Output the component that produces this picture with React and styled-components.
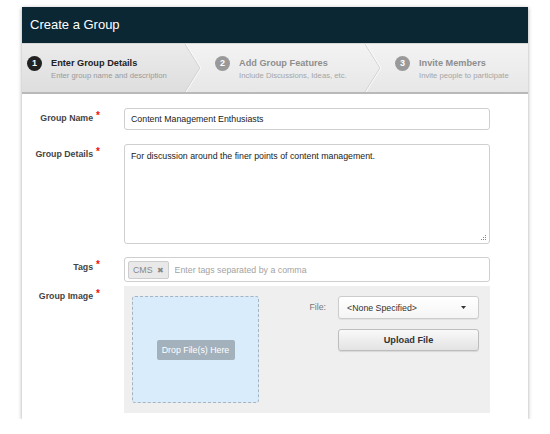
import React from "react";
import styled, { createGlobalStyle } from "styled-components";

const GlobalStyle = createGlobalStyle`
  html, body {
    margin: 0;
    padding: 0;
    background: #ffffff;
    font-family: "Liberation Sans", Arial, sans-serif;
  }
`;

const Card = styled.div`
  width: 506px;
  margin: 7px 0 0 22px;
  background: #fff;
  box-shadow: 0 1px 4px rgba(0, 0, 0, 0.35);
  padding-bottom: 6px;
`;

const Header = styled.div`
  height: 36px;
  background: #0b2733;
  color: #fff;
  font-size: 13px;
  line-height: 36px;
  padding-left: 8px;
`;

const StepsBar = styled.div`
  display: flex;
  height: 48px;
  background: linear-gradient(#f3f3f3, #e7e7e7);
  border-bottom: 2px solid #b9b9b9;
  border-top: 1px solid #d6d6d6;
`;

const Step = styled.div`
  display: flex;
  align-items: flex-start;
  gap: 9px;
  padding: 12px 0 0 ${(p) => (p.$first ? "5px" : "13px")};
  width: ${(p) => p.$width}px;
  box-sizing: border-box;
  background: ${(p) =>
    p.$active ? "linear-gradient(#ebebeb, #dedede)" : "transparent"};
`;

const Circle = styled.div`
  width: 15px;
  height: 15px;
  border-radius: 50%;
  background: ${(p) => (p.$active ? "#222" : "#999")};
  color: #fff;
  font-size: 9px;
  font-weight: bold;
  line-height: 15px;
  text-align: center;
  flex: none;
`;

const StepText = styled.div`
  display: flex;
  flex-direction: column;
  padding-top: 1px;
`;

const StepTitle = styled.div`
  font-size: 9.2px;
  font-weight: bold;
  line-height: 13px;
  color: ${(p) => (p.$active ? "#222" : "#8e8e8e")};
`;

const StepSub = styled.div`
  font-size: 7.7px;
  line-height: 11px;
  color: ${(p) => (p.$active ? "#9a9a9a" : "#a5a5a5")};
`;

const Form = styled.div`
  padding-top: 14px;
`;

const Row = styled.div`
  display: grid;
  grid-template-columns: 78px 366px;
  column-gap: 24px;
  margin-bottom: ${(p) => p.$gap || 0}px;
`;

const Label = styled.div`
  text-align: right;
  font-size: 8.8px;
  font-weight: bold;
  color: #444;
  line-height: 11px;
  padding-top: 4px;
  white-space: nowrap;
`;

const Req = styled.span`
  color: #e11;
  font-size: 10px;
  position: relative;
  top: -2px;
  margin-left: 3px;
`;

const TextInput = styled.input`
  box-sizing: border-box;
  width: 100%;
  height: 22px;
  border: 1px solid #cfcfcf;
  border-radius: 3px;
  padding: 0 6px;
  font-family: inherit;
  font-size: 8.8px;
  color: #222;
  outline: none;
`;

const AreaWrap = styled.div`
  position: relative;
`;

const TextArea = styled.textarea`
  box-sizing: border-box;
  width: 100%;
  height: 100px;
  border: 1px solid #cfcfcf;
  border-radius: 3px;
  padding: 6px 6px;
  font-family: inherit;
  font-size: 8.8px;
  color: #222;
  resize: none;
  outline: none;
  display: block;
`;

const Grip = styled.svg`
  position: absolute;
  right: 3px;
  bottom: 3px;
`;

const TagBox = styled.div`
  box-sizing: border-box;
  height: 25px;
  border: 1px solid #cfcfcf;
  border-radius: 3px;
  display: flex;
  align-items: center;
  padding: 0 3px;
  gap: 6px;
`;

const Chip = styled.span`
  height: 16px;
  line-height: 16px;
  background: #e9e9e9;
  border: 1px solid #cdcdcd;
  border-radius: 2px;
  padding: 0 4px;
  font-size: 8.8px;
  color: #888;
  white-space: nowrap;
`;

const ChipX = styled.span`
  font-size: 8px;
  margin-left: 4px;
  color: #888;
`;

const TagInput = styled.input`
  flex: 1;
  border: none;
  outline: none;
  font-family: inherit;
  font-size: 8.8px;
  padding: 0;
  &::placeholder {
    color: #a3a3a3;
  }
`;

const ImagePanel = styled.div`
  background: #efefef;
  display: flex;
  padding: 10px 11px 10px 8px;
  height: 107px;
`;

const DropZone = styled.div`
  width: 127px;
  box-sizing: border-box;
  background: #d9ecfc;
  border: 1px dashed #a9b3bd;
  border-radius: 3px;
  display: flex;
  align-items: center;
  justify-content: center;
`;

const DropButton = styled.div`
  width: 78px;
  height: 20px;
  line-height: 20px;
  text-align: center;
  background: #a3b1bd;
  border-radius: 2px;
  color: #fff;
  font-size: 8.8px;
`;

const FileControls = styled.div`
  margin-left: auto;
  display: grid;
  grid-template-columns: auto 141px;
  column-gap: 12px;
  row-gap: 10px;
  align-content: start;
`;

const FileLabel = styled.div`
  font-size: 8.8px;
  color: #777;
  line-height: 23px;
  text-align: right;
`;

const Select = styled.div`
  box-sizing: border-box;
  height: 23px;
  border: 1px solid #cccccc;
  border-radius: 3px;
  background: linear-gradient(#ffffff, #f5f5f5);
  box-shadow: 0 1px 1px rgba(0, 0, 0, 0.06);
  display: flex;
  align-items: center;
  justify-content: space-between;
  padding: 0 12px 0 8px;
  font-size: 8.8px;
  color: #333;
`;

const UploadButton = styled.button`
  grid-column: 2;
  height: 22px;
  border: 1px solid #bdbdbd;
  border-radius: 3px;
  background: linear-gradient(#f9f9f9, #e3e3e3);
  box-shadow: 0 1px 1px rgba(0, 0, 0, 0.1);
  font-family: inherit;
  font-size: 9.2px;
  font-weight: bold;
  color: #333;
  padding: 0;
`;

const Separator = ({ leftActive }) => (
  <svg width="18" height="48" viewBox="0 0 18 48" style={{ flex: "none", display: "block" }}>
    {leftActive && (
      <>
        <defs>
          <linearGradient id="actg" x1="0" y1="0" x2="0" y2="1">
            <stop offset="0" stopColor="#ebebeb" />
            <stop offset="1" stopColor="#dedede" />
          </linearGradient>
        </defs>
        <polygon points="0,0 1,0 16,24 1,48 0,48" fill="url(#actg)" />
      </>
    )}
    <polyline points="1,0 16,24 1,48" fill="none" stroke="#cfcfcf" strokeWidth="1" />
    <polyline points="2,0 17,24 2,48" fill="none" stroke="#fafafa" strokeWidth="1" />
  </svg>
);

const steps = [
  { n: 1, title: "Enter Group Details", sub: "Enter group name and description", width: 162 },
  { n: 2, title: "Add Group Features", sub: "Include Discussions, Ideas, etc.", width: 162 },
  { n: 3, title: "Invite Members", sub: "Invite people to participate", width: 146 },
];

export default function App() {
  const active = 1;
  return (
    <>
      <GlobalStyle />
      <Card>
        <Header>Create a Group</Header>
        <StepsBar>
          {steps.map((s, i) => (
            <React.Fragment key={s.n}>
              {i > 0 && <Separator leftActive={steps[i - 1].n === active} />}
              <Step $active={s.n === active} $first={i === 0} $width={s.width}>
                <Circle $active={s.n === active}>{s.n}</Circle>
                <StepText>
                  <StepTitle $active={s.n === active}>{s.title}</StepTitle>
                  <StepSub $active={s.n === active}>{s.sub}</StepSub>
                </StepText>
              </Step>
            </React.Fragment>
          ))}
        </StepsBar>
        <Form>
          <Row $gap={14}>
            <Label>
              Group Name<Req>*</Req>
            </Label>
            <TextInput defaultValue="Content Management Enthusiasts" />
          </Row>
          <Row $gap={13}>
            <Label>
              Group Details<Req>*</Req>
            </Label>
            <AreaWrap>
              <TextArea defaultValue="For discussion around the finer points of content management." />
              <Grip width="6" height="6" viewBox="0 0 6 6">
                <rect x="4" y="0" width="1" height="1" fill="#888" />
                <rect x="2" y="2" width="1" height="1" fill="#888" />
                <rect x="4" y="2" width="1" height="1" fill="#888" />
                <rect x="0" y="4" width="1" height="1" fill="#888" />
                <rect x="2" y="4" width="1" height="1" fill="#888" />
                <rect x="4" y="4" width="1" height="1" fill="#888" />
              </Grip>
            </AreaWrap>
          </Row>
          <Row $gap={4}>
            <Label>
              Tags<Req>*</Req>
            </Label>
            <TagBox>
              <Chip>
                CMS<ChipX>✖</ChipX>
              </Chip>
              <TagInput placeholder="Enter tags separated by a comma" />
            </TagBox>
          </Row>
          <Row>
            <Label>
              Group Image<Req>*</Req>
            </Label>
            <ImagePanel>
              <DropZone>
                <DropButton>Drop File(s) Here</DropButton>
              </DropZone>
              <FileControls>
                <FileLabel>File:</FileLabel>
                <Select>
                  <span>&lt;None Specified&gt;</span>
                  <svg width="5" height="3" viewBox="0 0 5 3">
                    <polygon points="0,0 5,0 2.5,3" fill="#333" />
                  </svg>
                </Select>
                <UploadButton>Upload File</UploadButton>
              </FileControls>
            </ImagePanel>
          </Row>
        </Form>
      </Card>
    </>
  );
}
